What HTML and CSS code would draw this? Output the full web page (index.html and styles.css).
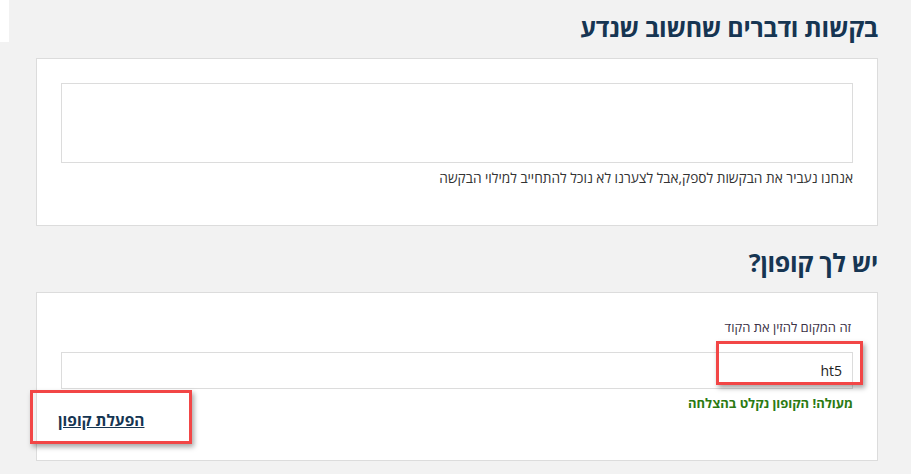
FILE: index.html
```html
<!DOCTYPE html>
<html lang="he" dir="rtl">
<head>
  <meta charset="UTF-8" />
  <title>בקשות וקופון</title>
  <link rel="stylesheet" href="styles.css">
</head>
<body>
  <div class="corner"></div>

  <div class="page">
    <h2 class="section-title">בקשות ודברים שחשוב שנדע</h2>
    <div class="card">
      <textarea class="requests" aria-label="בקשות"></textarea>
      <p class="hint">אנחנו נעביר את הבקשות לספק,אבל לצערנו לא נוכל להתחייב למילוי הבקשה</p>
    </div>

    <h2 class="section-title">יש לך קופון?</h2>
    <div class="card coupon-card">
      <label class="coupon-label" for="coupon">זה המקום להזין את הקוד</label>
      <div class="coupon-field">
        <input type="text" id="coupon" class="coupon-input" value="ht5" />
        <!-- annotation -->
        <span class="mark mark-input"></span>
      </div>
      <div class="coupon-row">
        <span class="success">מעולה! הקופון נקלט בהצלחה</span>
        <a href="#" class="apply">הפעלת קופון</a>
        <span class="mark mark-apply"></span>
      </div>
    </div>
  </div>
</body>
</html>
```

FILE: styles.css
```css
body {
  margin: 0;
  background: #f2f2f2;
  font-family: "Open Sans", "Liberation Sans", "DejaVu Sans", sans-serif;
  color: #333;
}
.corner {
  position: absolute;
  left: 0; top: 0;
  width: 9px; height: 42px;
  background: #fff;
}
.page {
  padding: 0 33px 0 36px;
}
.section-title {
  margin: 0;
  height: 58px;
  line-height: 54px;
  font-size: 25px;
  font-weight: 700;
  color: #163552;
  letter-spacing: -0.3px;
}
.page .card + .section-title {
  height: 66px;
  line-height: 72px;
}
.card {
  background: #fff;
  border: 1px solid #dcdcdc;
  padding: 24px 24px 0 24px;
  height: 142px;
}
.requests {
  display: block;
  width: 100%;
  height: 80px;
  box-sizing: border-box;
  border: 1px solid #dcdcdc;
  resize: none;
  margin: 0;
}
.hint {
  margin: 6px 0 0;
  font-size: 13.7px;
  line-height: 18px;
  color: #333;
}
.coupon-card {
  padding-top: 25px;
}
.coupon-label {
  display: block;
  padding-right: 2px;
  font-size: 13px;
  line-height: 18px;
  color: #3b3145;
}
.coupon-field {
  position: relative;
  margin-top: 16px;
}
.coupon-input {
  display: block;
  width: 100%;
  height: 37px;
  box-sizing: border-box;
  border: 1px solid #dcdcdc;
  padding: 0 10px;
  font-family: inherit;
  font-size: 14px;
  color: #222;
  direction: ltr;
  text-align: right;
  outline: none;
}
.coupon-row {
  position: relative;
  display: flex;
  justify-content: space-between;
  align-items: flex-start;
  margin-top: 5px;
}
.success {
  font-size: 13px;
  font-weight: 700;
  color: #2b7a12;
  line-height: 18px;
}
.apply {
  margin-top: 17px;
  margin-left: -3px;
  font-size: 15.5px;
  font-weight: 700;
  line-height: 18px;
  color: #163552;
  text-decoration: underline;
}
/* red annotation boxes */
.mark {
  position: absolute;
  border: 3px solid #f24646;
  box-shadow: 2px 3px 5px rgba(0,0,0,0.35);
  pointer-events: none;
}
.mark-input {
  top: -11px;
  right: -10px;
  width: 141px;
  height: 38px;
}
.mark-apply {
  top: -4px;
  left: -31px;
  width: 156px;
  height: 48px;
}
```
